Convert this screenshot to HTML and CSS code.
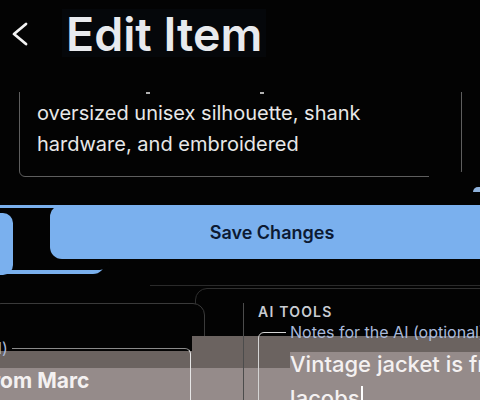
FILE: index.html
```html
<!DOCTYPE html>
<html lang="en">
<head>
<meta charset="utf-8">
<title>Edit Item</title>
<link rel="stylesheet" href="styles.css">
</head>
<body>
<div class="page">
  <main class="content">
    <section class="desc">
      <p class="desc-text"><span class="peek"><span class="tick tick-a"></span><span class="tick tick-b"></span></span><br>oversized unisex silhouette, shank<br>hardware, and embroidered</p>
    </section>
    <div class="actions">
      <span class="ghost"></span>
      <span class="ghost-mask"></span>
      <span class="ghost-tab"></span>
      <button class="save">Save Changes</button>
    </div>
    <div class="divider"></div>
    <div class="panels">
      <section class="panel panel-right">
        <div class="tools">
          <h3 class="tools-title">AI TOOLS</h3>
          <fieldset class="notes">
            <legend>Notes for the AI (optional)</legend>
            <p class="notes-text">Vintage jacket is from Marc<br><span class="second">Jacobs</span><span class="caret"></span></p>
          </fieldset>
        </div>
      </section>
      <section class="panel panel-left">
        <fieldset class="notes notes-ghost">
          <legend>Notes for the AI (optional)</legend>
          <p class="notes-text">Vintage jacket is from Marc</p>
        </fieldset>
      </section>
    </div>
  </main>
  <header class="topbar">
    <svg class="back" viewBox="0 0 18 24" aria-hidden="true"><polyline points="15,2 3,12 15,22" fill="none" stroke="#f2f2f2" stroke-width="2.8" stroke-linecap="round" stroke-linejoin="round"/></svg>
    <h1 class="title">Edit Item</h1>
  </header>
  <span class="corner-bit"></span>
  <div class="glitch g-dark-right"></div>
  <div class="glitch g-dark-left"></div>
  <div class="glitch g-light-bottom"></div>
  <div class="glitch g-light-right"></div>
</div>
</body>
</html>
```
FILE: styles.css
```css
* { box-sizing: border-box; margin: 0; padding: 0; }
html, body { width: 480px; height: 400px; overflow: hidden; background: #030303; }
body { font-family: Inter, "Noto Sans", sans-serif; color: #e6e7ea; }

.page { position: relative; width: 480px; height: 400px; overflow: hidden; }

/* header */
.topbar {
  position: absolute; top: 0; left: 0; right: 0; height: 92px;
  background: #030303; display: flex; align-items: flex-start; z-index: 5;
}
.back { margin: 22px 0 0 11px; width: 18px; height: 24px; flex: none; }
.title {
  margin: 9px 0 0 33px; padding: 2px 4px 0;
  font-size: 46.5px; line-height: 46px; font-weight: 600;
  color: #e8eaee; background: #05070a;
}

/* scrolled content */
.content { padding-top: 54px; }

.desc {
  position: relative; margin-left: 19px; width: 443px;
  border: 1px solid #5e5e5e; border-radius: 6px;
  padding: 12px 17px 16px;
}
.desc::after {
  content: ""; position: absolute; right: -2px; bottom: -2px;
  width: 34px; height: 6px; background: #030303;
}
.desc-text { font-size: 20px; line-height: 31px; color: #e8e8e8; white-space: nowrap; }
.tick { display: inline-block; width: 4px; height: 3px; background: #b0b0b0; vertical-align: -5px; }
.tick-a { margin-left: 109px; }
.tick-b { margin-left: 110px; }

.actions { position: relative; margin-top: 28px; height: 54px; }
.save {
  display: block; margin-left: 50px; width: 444px; height: 54px;
  border: none; border-radius: 12px; background: #7ab0ee;
  font-family: inherit; font-size: 18px; font-weight: 600; color: #0c1a33;
  position: relative;
}
.ghost {
  position: absolute; left: -20px; top: 0; width: 125px; height: 69px;
  background: #7ab0ee; border-radius: 12px;
}
.ghost-mask {
  position: absolute; left: 0; top: 3px; width: 110px; height: 62px;
  background: #030303; border-radius: 0 10px 10px 0;
}
.ghost-tab {
  position: absolute; left: -10px; top: 8px; width: 23px; height: 62px;
  background: #7ab0ee; border-radius: 0 10px 10px 0;
}

.divider { margin: 26px 0 0 150px; height: 1px; background: #2a2a2a; }

.panels {
  display: grid; grid-template-columns: 206px 10px 295px;
  margin: 2px 0 0 -11px; align-items: start;
}
.panel { height: 220px; border-radius: 12px; }
.panel-right {
  grid-column: 2 / 4; grid-row: 1;
  border: 1px solid #2f2f2f; padding: 14px 0 0 47px;
}
.panel-left {
  grid-column: 1 / 3; grid-row: 1; margin-top: 15px;
  border: 1px solid #3a3a3a; background: #030303; padding-top: 35px;
}

.tools {
  position: relative; z-index: 2; height: 200px;
  border-left: 1px solid #4c4c4c; padding-left: 14px;
}
.tools-title {
  font-size: 14px; line-height: 17px; font-weight: 600;
  letter-spacing: 1.2px; color: #c9ccd2;
}

.notes {
  position: relative; z-index: 2;
  border: 1px solid #d4d4d4; border-radius: 6px;
  padding: 6px 20px 0 31px; min-width: 0;
}
.notes legend {
  font-size: 16px; line-height: 18px; color: #a9badb; padding: 0 4px;
  margin-left: -4px; white-space: nowrap;
}
.tools .notes { margin-top: 3px; width: 330px; height: 120px; }
.notes-text {
  font-size: 22px; line-height: 34px; font-weight: 500; color: #f4f1f1;
  white-space: nowrap;
}
.second { margin-left: -7px; }
.caret { display: inline-block; width: 2px; height: 24px; background: #ffffff; vertical-align: -4px; margin-left: 1px; }

.notes-ghost {
  margin-left: -213px; width: 414px; height: 100px;
  border-color: #8a8a8a; border-right-color: #e6e6e6;
  padding: 7px 20px 0 31px;
}
.notes-ghost legend { margin-left: 0; }
.notes-ghost .notes-text { font-size: 21px; font-weight: 700; }

.corner-bit {
  position: absolute; left: 473px; top: 187px; width: 14px; height: 5px;
  background: #8fb2dc; border-radius: 7px 0 0 0;
}

/* glitch overlays */
.glitch { position: absolute; z-index: 1; }
.g-dark-right { left: 192px; top: 336px; width: 288px; height: 64px; background: #6b6360; }
.g-dark-left { left: 0; top: 351px; width: 192px; height: 49px; background: #6b6360; }
.g-light-bottom { left: 0; top: 368px; width: 480px; height: 32px; background: #958b8a; }
.g-light-right { left: 290px; top: 352px; width: 190px; height: 16px; background: #958b8a; }
```
